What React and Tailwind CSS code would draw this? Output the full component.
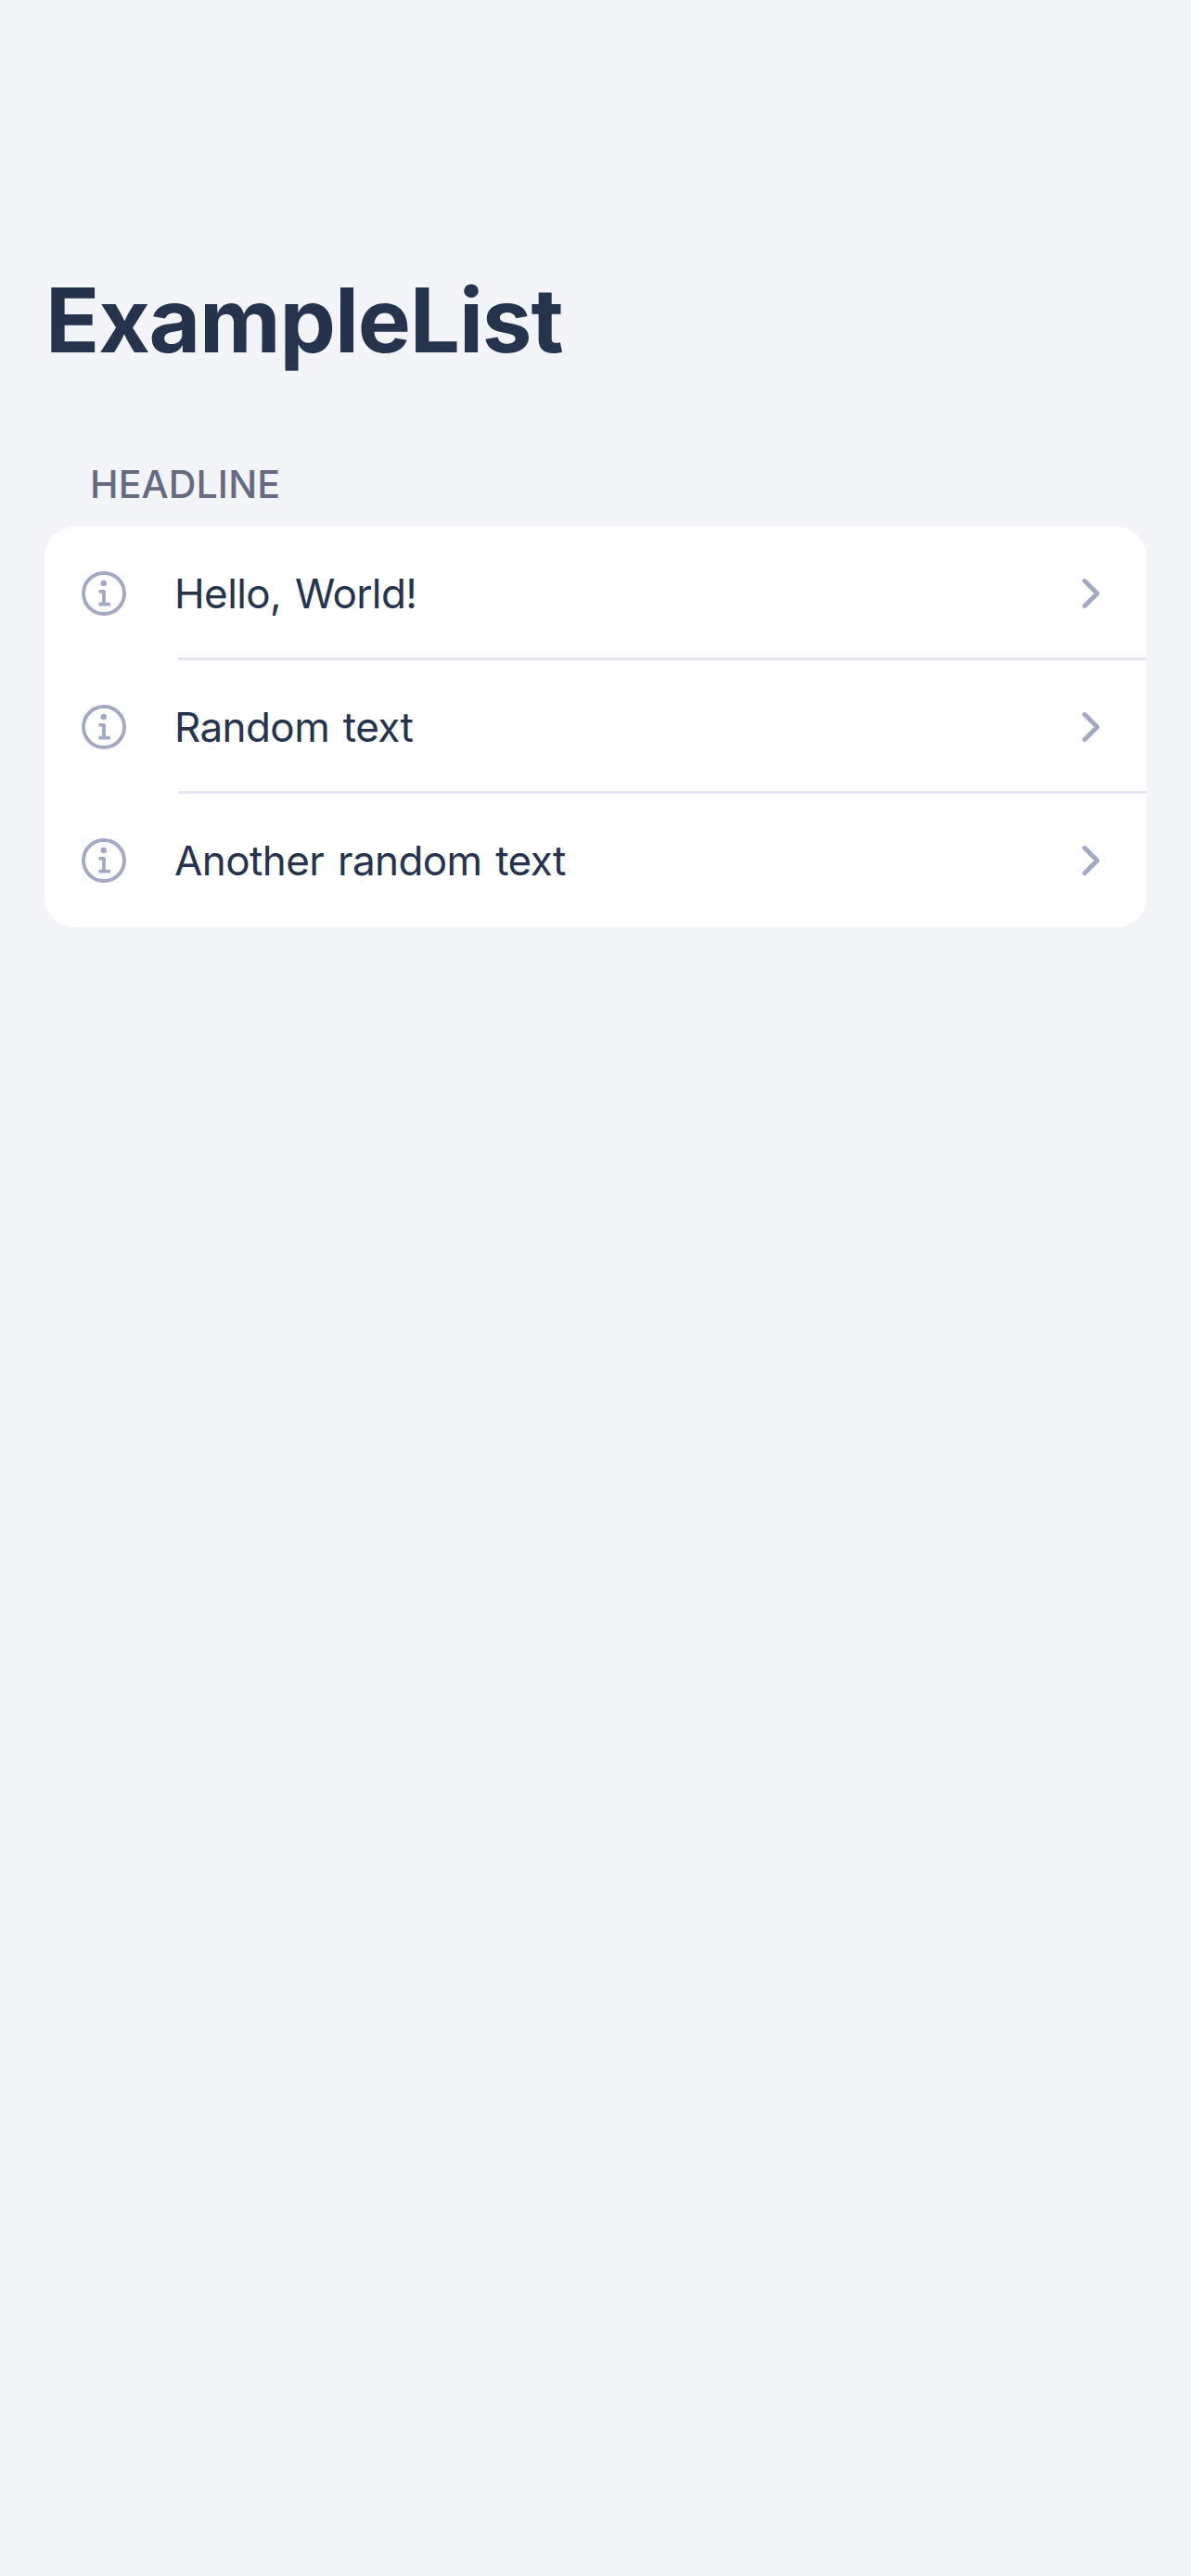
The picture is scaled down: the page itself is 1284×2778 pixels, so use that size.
const items = ["Hello, World!", "Random text", "Another random text"];

function InfoIcon() {
  return (
    <svg className="size-12 shrink-0" viewBox="0 0 48 48" fill="none" stroke="currentColor" aria-hidden="true">
      <circle cx="24" cy="24" r="22" strokeWidth="4" />
      <circle cx="23.8" cy="13" r="3.3" fill="currentColor" stroke="none" />
      <path d="M20 21.8H24V35.6M20 35.6H29.4" strokeWidth="3.8" strokeLinecap="round" strokeLinejoin="round" />
    </svg>
  );
}

function ChevronIcon() {
  return (
    <svg className="h-9 w-6 shrink-0" viewBox="0 0 24 36" fill="none" stroke="currentColor" aria-hidden="true">
      <path d="M5.3 4.5L18.9 18L5.3 31.5" strokeWidth="5" strokeLinecap="round" strokeLinejoin="round" />
    </svg>
  );
}

function Row({ label, divided }) {
  return (
    <li className="flex h-36 items-stretch pl-10 text-[#a3a9c2]">
      <div className="flex w-26 shrink-0 items-center">
        <InfoIcon />
      </div>
      <div className={divided ? "flex flex-1 items-center pr-12 shadow-[inset_0_-3px_0_#e6e8f0]" : "flex flex-1 items-center pr-12"}>
        <span className="-ml-[4px] flex-1 text-[44px] leading-[60px] tracking-[-0.6px] [word-spacing:3px] text-[#26334d]">{label}</span>
        <ChevronIcon />
      </div>
    </li>
  );
}

export default function App() {
  return (
    <main className="min-h-[2778px] w-full bg-[#f3f4f8] px-12 pt-[285px] font-['Inter',sans-serif]">
      <h1 className="ml-px text-[96px] leading-[120px] font-bold tracking-[-1.15px] text-[#26334d]">ExampleList</h1>
      <section className="mt-[92px]">
        <h2 className="pl-[49px] text-[41px] leading-[50px] font-medium tracking-[0.15px] text-[#666b82]">HEADLINE</h2>
        <ul className="mt-[21px] overflow-hidden rounded-[32px] bg-white">
          {items.map((label, i) => (
            <Row key={label} label={label} divided={i < items.length - 1} />
          ))}
        </ul>
      </section>
    </main>
  );
}
